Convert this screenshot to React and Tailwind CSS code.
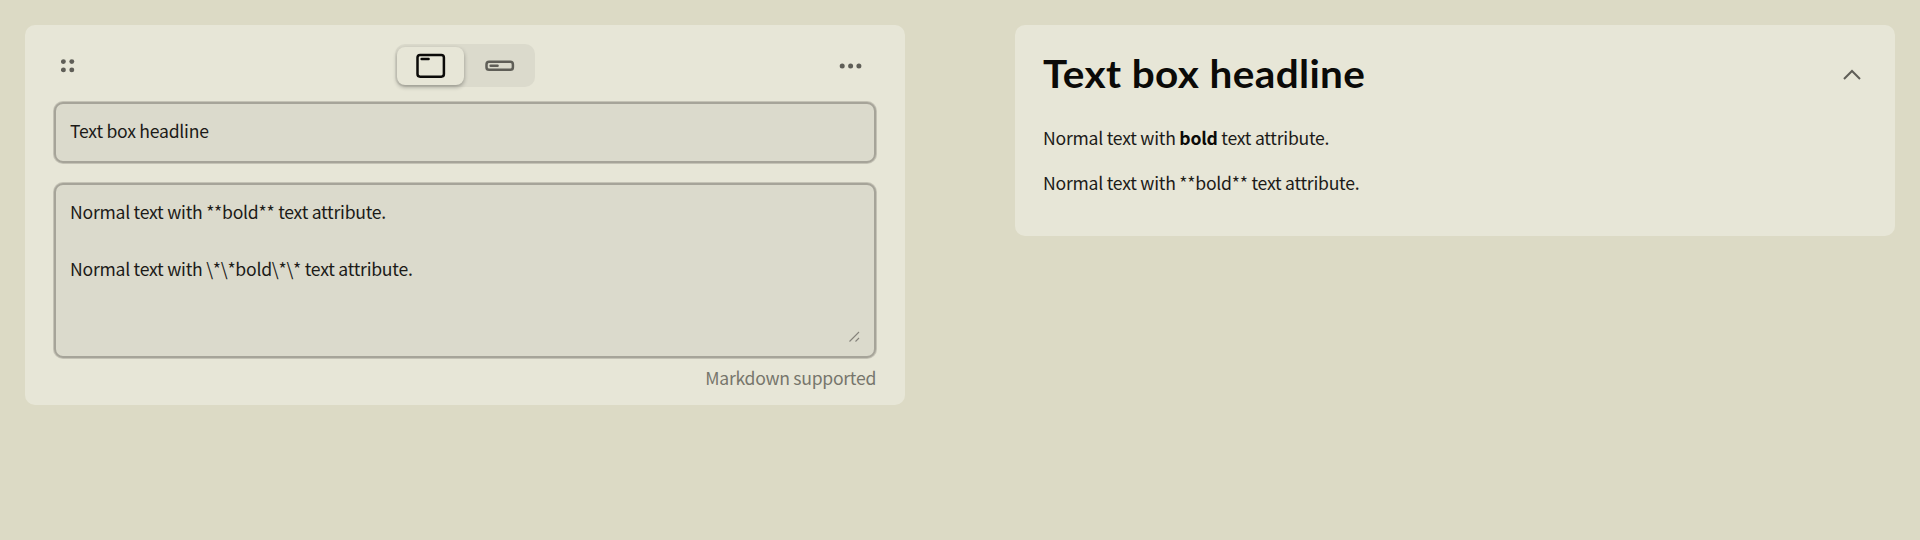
const body = "font-['Noto_Sans_CJK_JP','Noto_Sans',sans-serif]";

function DragIcon() {
  return (
    <svg width="14" height="14" viewBox="0 0 14 14" fill="#5f5e57">
      <circle cx="2.4" cy="2.6" r="2.45" />
      <circle cx="10.8" cy="2.6" r="2.45" />
      <circle cx="2.4" cy="10.9" r="2.45" />
      <circle cx="10.8" cy="10.9" r="2.45" />
    </svg>
  );
}

function BoxIcon() {
  return (
    <svg width="30" height="26" viewBox="0 0 30 26" fill="none" stroke="#0b0a08" strokeLinecap="round">
      <rect x="1.5" y="1.9" width="26.4" height="21.8" rx="2.6" strokeWidth="2.5" />
      <path d="M5.6 6h7" strokeWidth="2.4" />
    </svg>
  );
}

function BarIcon() {
  return (
    <svg width="30" height="12" viewBox="0 0 30 12" fill="none" stroke="#5f5e57" strokeLinecap="round">
      <rect x="1.5" y="1.8" width="26.4" height="8" rx="2.6" strokeWidth="2.5" />
      <path d="M5.6 5.8h7" strokeWidth="2.4" />
    </svg>
  );
}

function MoreIcon() {
  return (
    <svg width="24" height="6" viewBox="0 0 24 6" fill="#5f5e57">
      <circle cx="3.2" cy="3" r="2.5" />
      <circle cx="11.6" cy="3" r="2.5" />
      <circle cx="19.9" cy="3" r="2.5" />
    </svg>
  );
}

function Editor() {
  return (
    <section className="flex h-[380px] w-[880px] flex-col rounded-[10px] bg-[#e7e6d7] px-[29px] pt-[19px]">
      <div className="flex h-[43px] items-center justify-between pl-[7px] pr-[13px]">
        <DragIcon />
        <div className="ml-[16px] flex h-[43px] w-[140px] items-center rounded-[10px] bg-[#dbdacc] pl-[2px]">
          <button className="flex h-[38px] w-[67px] items-center justify-center rounded-[8px] bg-[#e7e6d7] shadow-[0_2px_4px_rgba(0,0,0,0.32)]">
            <BoxIcon />
          </button>
          <button className="flex h-[38px] flex-1 items-center justify-center">
            <BarIcon />
          </button>
        </div>
        <MoreIcon />
      </div>
      <div className="mt-[15px] flex h-[61px] items-center rounded-[9px] border-2 border-[#a6a499] bg-[#dbdacc] px-[14px] pb-[2px] text-[17.6px] tracking-[-0.25px] text-[#1c1b18] shadow-[0_0_0_1px_#c4c2b5]">
        Text box headline
      </div>
      <div className="mt-[20px] flex h-[175px] justify-between rounded-[9px] border-2 border-[#a6a499] bg-[#dbdacc] px-[14px] pt-[13px] text-[17.6px] leading-[28.5px] tracking-[-0.25px] text-[#1c1b18] shadow-[0_0_0_1px_#c4c2b5]">
        <div className="whitespace-pre">{"Normal text with **bold** text attribute.\n\nNormal text with \\*\\*bold\\*\\* text attribute."}</div>
        <svg className="mb-[13px] self-end" width="13" height="13" viewBox="0 0 13 13" stroke="#85837a" strokeWidth="1.1">
          <path d="M2.5 11.5 12 2M8.5 11.5 12 8" />
        </svg>
      </div>
      <div className="mt-[6px] text-right text-[17.6px] leading-[28px] tracking-[-0.29px] text-[#77766c]">Markdown supported</div>
    </section>
  );
}

function Preview() {
  return (
    <section className="h-[211px] w-[880px] rounded-[10px] bg-[#e7e6d7] px-[28px] pt-[24px] text-[17.6px] tracking-[-0.24px] text-[#1c1b18]">
      <div className="flex h-[52px] items-center justify-between pr-[6px]">
        <h1 className="origin-left scale-x-[1.08] whitespace-nowrap pb-[2px] font-['Lato',sans-serif] text-[37.5px] font-bold tracking-[0.35px] text-[#0b0a08]">Text box headline</h1>
        <svg width="18" height="12" viewBox="0 0 18 12" fill="none" stroke="#5f5e57" strokeWidth="2">
          <path d="M1 10 9 2l8 8" />
        </svg>
      </div>
      <p className="mt-[22px] leading-[30px]">
        Normal text with <strong className="font-bold text-[#0b0a08]">bold</strong> text attribute.
      </p>
      <p className="mt-[15px] leading-[30px]">Normal text with **bold** text attribute.</p>
    </section>
  );
}

export default function App() {
  return (
    <main className={`${body} flex h-[540px] w-[1920px] items-start justify-between bg-[#dcdac5] p-[25px]`}>
      <Editor />
      <Preview />
    </main>
  );
}
